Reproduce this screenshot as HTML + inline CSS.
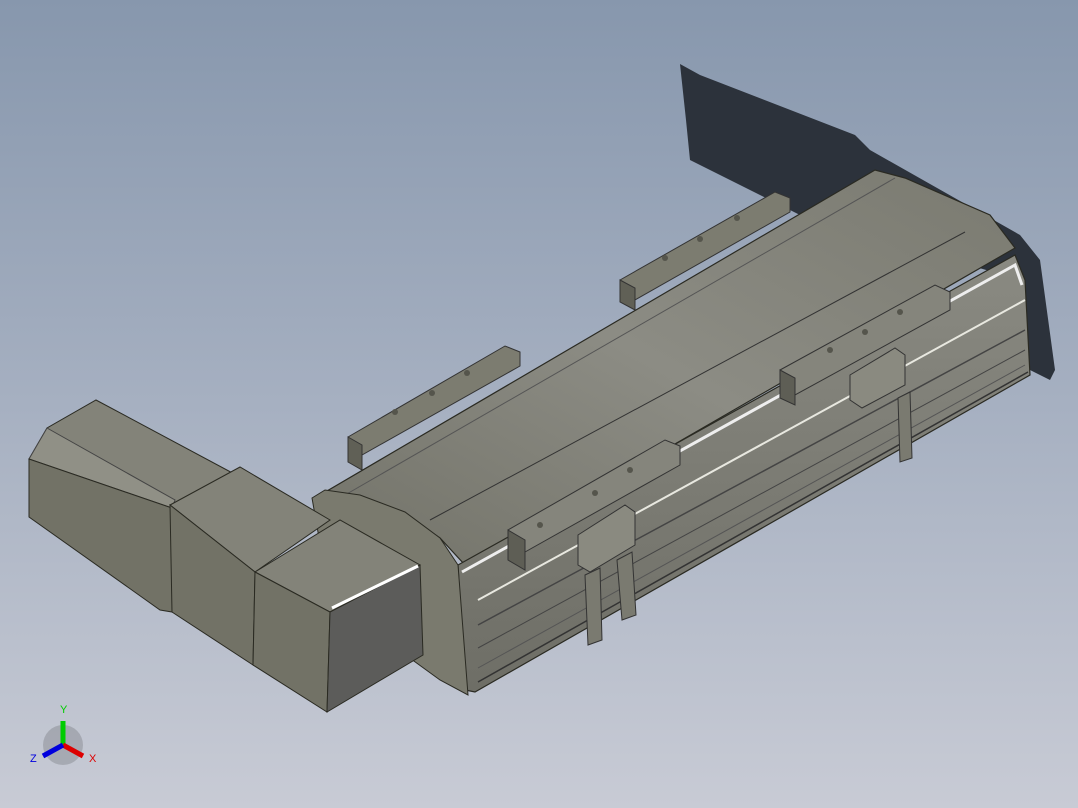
<!DOCTYPE html>
<html><head><style>
html,body{margin:0;padding:0;width:1078px;height:808px;overflow:hidden}
body{background:linear-gradient(180deg,#8797ad 0%,#a6b0c1 50%,#c8cbd5 100%)}
svg{position:absolute;left:0;top:0}
</style></head><body>
<svg width="1078" height="808" viewBox="0 0 1078 808" xmlns="http://www.w3.org/2000/svg">
<defs>
<linearGradient id="top" x1="0" y1="1" x2="1" y2="0"><stop offset="0" stop-color="#727268"/><stop offset="0.5" stop-color="#8c8c84"/><stop offset="1" stop-color="#7a7a70"/></linearGradient>
<linearGradient id="face" x1="0" y1="0" x2="0" y2="1"><stop offset="0" stop-color="#8a8a82"/><stop offset="1" stop-color="#6e6e66"/></linearGradient>
</defs>
<!-- shadow -->
<polygon points="680,64 700,75 855,135 870,150 1020,235 1040,260 1055,370 1050,380 1030,370 1020,280 800,215 690,160 686,120" fill="#2c323b"/>
<!-- mounting blocks back -->
<polygon points="620,280 775,192 790,198 790,212 635,300 620,295" fill="#7c7c70" stroke="#333" stroke-width="1"/>
<polygon points="348,437 505,346 520,352 520,366 362,455 348,452" fill="#7c7c70" stroke="#333" stroke-width="1"/>
<polygon points="620,280 635,288 635,310 620,302" fill="#606056" stroke="#333"/>
<polygon points="348,437 362,445 362,470 348,462" fill="#606056" stroke="#333"/>
<!-- main body top -->
<polygon points="315,498 875,170 905,178 990,215 1015,248 465,565 440,538 400,512 350,495" fill="url(#top)" stroke="#2a2a22" stroke-width="1.2"/>
<line x1="430" y1="520" x2="965" y2="232" stroke="#333" stroke-width="1"/>
<line x1="345" y1="495" x2="895" y2="178" stroke="#555" stroke-width="1"/>
<!-- right end face -->
<polygon points="458,565 1015,255 1025,280 1030,375 475,692 465,690 460,600" fill="url(#face)" stroke="#2a2a22" stroke-width="1.2"/>
<polyline points="462,572 1015,265 1022,285" fill="none" stroke="#eee" stroke-width="3"/>
<polyline points="478,600 1025,300" stroke="#e8e8e0" stroke-width="2"/>
<polyline points="478,625 1025,330" stroke="#444" stroke-width="1.5"/>
<polyline points="478,648 1025,350" stroke="#444" stroke-width="1"/>
<polyline points="478,668 1025,365" stroke="#555" stroke-width="1"/>
<polyline points="478,682 1028,372" stroke="#333" stroke-width="1.5"/>
<!-- front blocks -->
<polygon points="508,530 665,440 680,446 680,465 525,552 508,546" fill="#85857c" stroke="#333"/>
<polygon points="508,530 525,540 525,570 508,560" fill="#5e5e55" stroke="#333"/>
<polygon points="780,370 935,285 950,292 950,310 795,395 780,390" fill="#85857c" stroke="#333"/>
<polygon points="780,370 795,378 795,405 780,398" fill="#5e5e55" stroke="#333"/>
<g fill="#55554c"><circle cx="540" cy="525" r="3"/><circle cx="595" cy="493" r="3"/><circle cx="630" cy="470" r="3"/><circle cx="830" cy="350" r="3"/><circle cx="865" cy="332" r="3"/><circle cx="900" cy="312" r="3"/><circle cx="395" cy="412" r="3"/><circle cx="432" cy="393" r="3"/><circle cx="467" cy="373" r="3"/><circle cx="665" cy="258" r="3"/><circle cx="700" cy="239" r="3"/><circle cx="737" cy="218" r="3"/></g>
<!-- brackets -->
<polygon points="578,535 625,505 635,512 635,545 590,572 578,565" fill="#8a8a80" stroke="#333"/>
<polygon points="585,575 600,568 602,640 588,645" fill="#7a7a70" stroke="#333"/>
<polygon points="617,560 632,552 636,615 622,620" fill="#7a7a70" stroke="#333"/>
<polygon points="850,375 895,348 905,355 905,385 862,408 850,400" fill="#8a8a80" stroke="#333"/>
<polygon points="898,398 910,392 912,458 900,462" fill="#7a7a70" stroke="#333"/>
<!-- left end cap -->
<polygon points="312,498 325,490 360,495 405,512 440,538 458,565 468,695 440,680 330,600" fill="#7a7a6e" stroke="#2a2a22"/>
<!-- motor long box -->
<polygon points="29,459 47,428 96,400 240,477 172,508" fill="#838379" stroke="#2a2a22"/>
<polygon points="47,428 175,500 172,508 29,459" fill="#909086" stroke="#444"/>
<polygon points="29,459 172,508 172,612 160,610 29,517" fill="#727266" stroke="#2a2a22"/>
<!-- gearbox -->
<polygon points="170,505 240,467 330,520 255,572" fill="#838379" stroke="#2a2a22"/>
<polygon points="170,505 255,572 253,665 172,612" fill="#727266" stroke="#2a2a22"/>
<!-- cube -->
<polygon points="255,572 340,520 420,565 330,612" fill="#838379" stroke="#2a2a22"/>
<polygon points="255,572 330,612 327,712 253,665" fill="#727266" stroke="#2a2a22"/>
<polygon points="330,612 420,565 423,655 327,712" fill="#5c5c5a" stroke="#2a2a22"/>
<line x1="332" y1="608" x2="418" y2="566" stroke="#fff" stroke-width="3"/>
<!-- axis -->
<g transform="translate(63,745)">
<circle r="20" fill="#000" opacity="0.15"/>
<line x1="0" y1="0" x2="0" y2="-24" stroke="#0c0" stroke-width="5"/>
<line x1="0" y1="0" x2="20" y2="11" stroke="#d00" stroke-width="5"/>
<line x1="0" y1="0" x2="-20" y2="11" stroke="#00d" stroke-width="5"/>
<text x="-3" y="-32" font-family="Liberation Sans,sans-serif" font-size="11" fill="#0c0">Y</text>
<text x="26" y="17" font-family="Liberation Sans,sans-serif" font-size="11" fill="#d00">X</text>
<text x="-33" y="17" font-family="Liberation Sans,sans-serif" font-size="11" fill="#00d">Z</text>
</g>
</svg>
</body></html>
